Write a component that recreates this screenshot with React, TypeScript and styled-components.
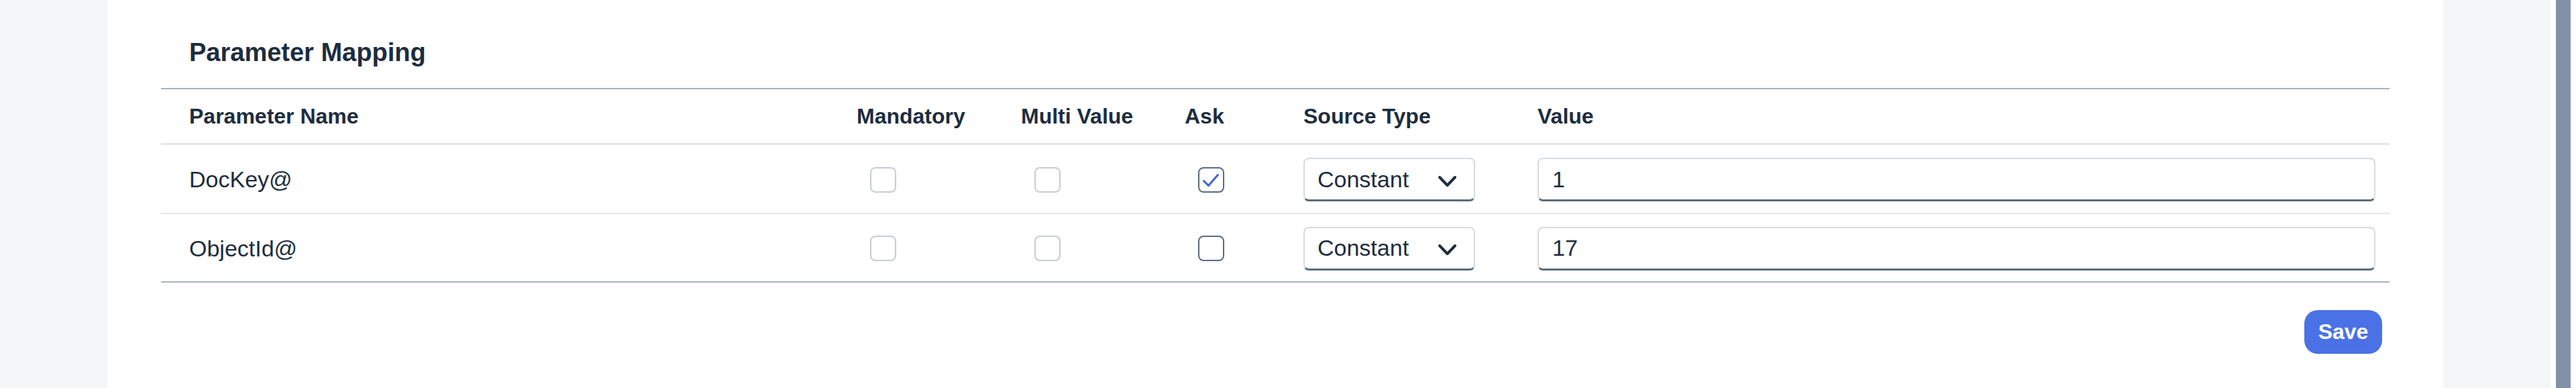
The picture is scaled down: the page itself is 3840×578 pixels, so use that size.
import styled, { createGlobalStyle } from "styled-components";

const GlobalStyle = createGlobalStyle`
  html, body {
    margin: 0;
    padding: 0;
    background-color: #f5f6f7;
    font-family: "Liberation Sans", Arial, sans-serif;
    color: #1d2d3e;
  }
  * {
    box-sizing: border-box;
  }
`;

const Page = styled.div`
  display: flex;
  height: 578px;
  overflow: hidden;
`;
const Main = styled.div`
  flex: 1;
  padding: 0 160px;
  background-color: #f5f6f7;
`;
const ScrollTrack = styled.div`
  width: 38px;
  padding: 0 8px;
  background-color: #ffffff;
  display: flex;
`;
const ScrollThumb = styled.div`
  flex: 1;
  background-color: #8390a6;
`;
const Panel = styled.div`
  height: 100%;
  background-color: #ffffff;
  padding: 0 80px;
`;
const Title = styled.h2`
  margin: 0 0 31px;
  padding: 56px 0 0 42px;
  font-size: 38px;
  line-height: 44px;
  font-weight: 700;
`;
const Table = styled.div`
  border-top: 2px solid #a9b2bd;
  border-bottom: 2px solid #a9b2bd;
`;
const Row = styled.div<{ header?: boolean }>`
  display: grid;
  grid-template-columns: 1037px 245px 244px 177px 349px 1fr;
  align-items: center;
  padding-right: 21px;
  padding-top: ${(p) => (p.header ? "1px" : "2px")};
  height: ${(p) => (p.header ? "83px" : "103px")};
  border-bottom: ${(p) => (p.header ? "3px solid #e5e6e8" : "2px solid #e5e6e8")};
  &:last-child {
    border-bottom: none;
    height: 100px;
  }
`;
const HeadCell = styled.div<{ first?: boolean }>`
  font-size: 32px;
  font-weight: 700;
  padding-left: ${(p) => (p.first ? "42px" : "0")};
`;
const NameCell = styled.div`
  font-size: 34px;
  padding-left: 42px;
`;
const Cell = styled.div`
  display: flex;
  align-items: center;
`;
const CheckBox = styled.span<{ enabled?: boolean }>`
  display: inline-flex;
  width: 39px;
  height: 38px;
  margin-left: 20px;
  border: 2.5px solid ${(p) => (p.enabled ? "#5b6b7e" : "#c7ccd3")};
  border-radius: 8px;
  background-color: #ffffff;
`;
const Select = styled.div`
  width: 256px;
  height: 65px;
  display: flex;
  align-items: center;
  justify-content: space-between;
  padding: 0 25px 0 19px;
  border: 2px solid #d7dbe0;
  border-bottom: 3px solid #5b6b7e;
  border-radius: 8px;
  font-size: 34px;
  svg {
    margin-top: 6px;
  }
`;
const ValueInput = styled.input`
  width: 100%;
  height: 65px;
  padding: 0 20px;
  border: 2px solid #d7dbe0;
  border-bottom: 3px solid #5b6b7e;
  border-radius: 8px;
  font-family: "Liberation Sans", Arial, sans-serif;
  font-size: 34px;
  color: #1d2d3e;
  background-color: #ffffff;
  outline: none;
`;
const Footer = styled.div`
  display: flex;
  justify-content: flex-end;
  padding: 41px 11px 0 0;
`;
const SaveButton = styled.button`
  width: 116px;
  height: 65px;
  border: none;
  border-radius: 20px;
  background-color: #4a72e6;
  color: #ffffff;
  font-family: "Liberation Sans", Arial, sans-serif;
  font-size: 32px;
  font-weight: 700;
  cursor: pointer;
`;

type Param = {
  name: string;
  ask: boolean;
  value: string;
};

const params: Param[] = [
  { name: "DocKey@", ask: true, value: "1" },
  { name: "ObjectId@", ask: false, value: "17" },
];

function Check({ checked, enabled }: { checked?: boolean; enabled?: boolean }) {
  return (
    <CheckBox enabled={enabled}>
      {checked ? (
        <svg width="34" height="33" viewBox="0 0 34 33">
          <polyline
            points="6.5,18.5 13.5,25.5 27.5,9.5"
            fill="none"
            stroke="#3d63e2"
            strokeWidth="3"
            strokeLinecap="round"
            strokeLinejoin="round"
          />
        </svg>
      ) : null}
    </CheckBox>
  );
}

function App() {
  return (
    <Page>
      <GlobalStyle />
      <Main>
        <Panel>
          <Title>Parameter Mapping</Title>
          <Table>
            <Row header>
              <HeadCell first>Parameter Name</HeadCell>
              <HeadCell>Mandatory</HeadCell>
              <HeadCell>Multi Value</HeadCell>
              <HeadCell>Ask</HeadCell>
              <HeadCell>Source Type</HeadCell>
              <HeadCell>Value</HeadCell>
            </Row>
            {params.map((p) => (
              <Row key={p.name}>
                <NameCell>{p.name}</NameCell>
                <Cell>
                  <Check />
                </Cell>
                <Cell>
                  <Check />
                </Cell>
                <Cell>
                  <Check enabled checked={p.ask} />
                </Cell>
                <Cell>
                  <Select>
                    <span>Constant</span>
                    <svg width="29" height="19" viewBox="0 0 29 19">
                      <polyline
                        points="3,3 14.5,15 26,3"
                        fill="none"
                        stroke="#1d2d3e"
                        strokeWidth="4"
                        strokeLinecap="round"
                        strokeLinejoin="round"
                      />
                    </svg>
                  </Select>
                </Cell>
                <Cell>
                  <ValueInput value={p.value} readOnly />
                </Cell>
              </Row>
            ))}
          </Table>
          <Footer>
            <SaveButton>Save</SaveButton>
          </Footer>
        </Panel>
      </Main>
      <ScrollTrack>
        <ScrollThumb />
      </ScrollTrack>
    </Page>
  );
}

export default App;
